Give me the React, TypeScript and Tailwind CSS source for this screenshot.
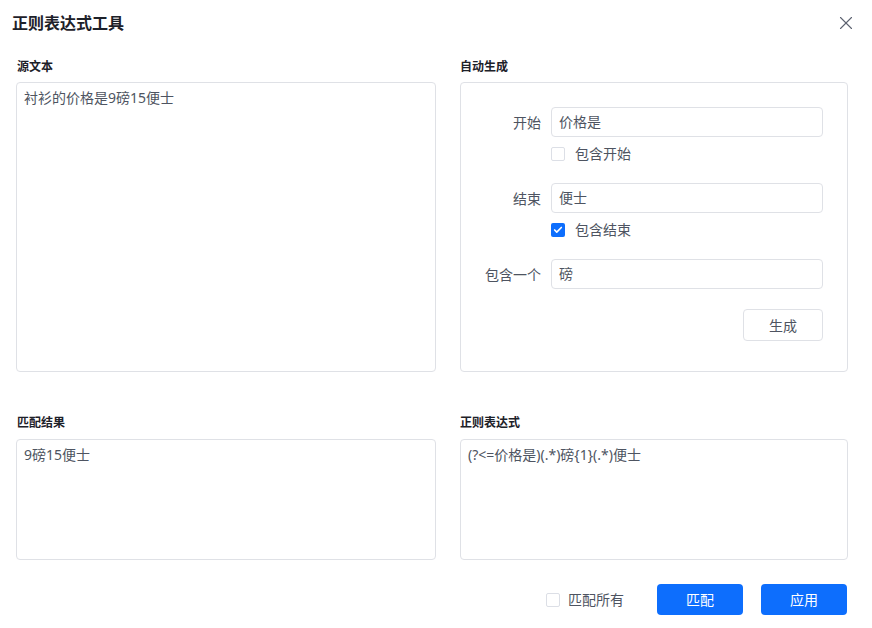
import { X, Check } from "lucide-react";

const font = { fontFamily: '"Noto Sans", "Noto Sans CJK SC", sans-serif' };

function Field({ label, value }: { label: string; value: string }) {
  return (
    <div className="flex items-center">
      <span className="w-[90px] pr-[10px] text-right text-[14px] text-[#4e5461]">{label}</span>
      <div className="h-[30px] flex-1 rounded-[4px] border border-[#dfe1e6] px-[7px] text-[14px] leading-[28px] text-[#4e5461]">
        {value}
      </div>
    </div>
  );
}

function CheckBox({ checked, label }: { checked?: boolean; label: string }) {
  return (
    <div className="flex h-[20px] items-center gap-[10px] text-[14px] leading-[20px] text-[#4e5461]">
      {checked ? (
        <span className="flex h-[14px] w-[14px] items-center justify-center rounded-[2px] bg-[#0d6efd]">
          <Check className="h-[10px] w-[10px] text-white" strokeWidth={4} />
        </span>
      ) : (
        <span className="h-[14px] w-[14px] rounded-[2px] border border-[#dcdfe6] bg-white" />
      )}
      <span>{label}</span>
    </div>
  );
}

export default function App() {
  return (
    <div className="h-[628px] w-[872px] bg-white" style={font}>
      <div className="flex items-center justify-between pl-[12px] pr-[15px] pt-[11px]">
        <h1 className="text-[16px] font-bold leading-[24px] text-[#1d2129]">正则表达式工具</h1>
        <X className="h-[22px] w-[22px] text-[#5c6270]" strokeWidth={1.2} />
      </div>

      <div className="mt-[22px] flex gap-[24px] px-[16px]">
        <div className="w-[420px]">
          <div className="pl-[1px] text-[12px] font-bold leading-[20px] text-[#1d2129]">源文本</div>
          <div className="mt-[5px] h-[290px] rounded-[4px] border border-[#dfe1e6] px-[7px] py-[4px] text-[14px] text-[#4e5461]">
            衬衫的价格是9磅15便士
          </div>
        </div>
        <div className="w-[388px]">
          <div className="text-[12px] font-bold leading-[20px] text-[#1d2129]">自动生成</div>
          <div className="mt-[5px] h-[290px] rounded-[4px] border border-[#dfe1e6] pr-[24px] pt-[24px]">
            <Field label="开始" value="价格是" />
            <div className="ml-[90px] mt-[7px]">
              <CheckBox label="包含开始" />
            </div>
            <div className="mt-[19px]">
              <Field label="结束" value="便士" />
            </div>
            <div className="ml-[90px] mt-[7px]">
              <CheckBox checked label="包含结束" />
            </div>
            <div className="mt-[19px]">
              <Field label="包含一个" value="磅" />
            </div>
            <div className="mt-[20px] flex justify-end">
              <button className="h-[32px] w-[80px] rounded-[4px] border border-[#dfe1e6] bg-white text-[14px] text-[#4e5461]">
                生成
              </button>
            </div>
          </div>
        </div>
      </div>

      <div className="mt-[41px] flex gap-[24px] px-[16px]">
        <div className="w-[420px]">
          <div className="pl-[1px] text-[12px] font-bold leading-[20px] text-[#1d2129]">匹配结果</div>
          <div className="mt-[6px] h-[121px] rounded-[4px] border border-[#dfe1e6] px-[7px] py-[4px] text-[14px] text-[#4e5461]">
            9磅15便士
          </div>
        </div>
        <div className="w-[388px]">
          <div className="text-[12px] font-bold leading-[20px] text-[#1d2129]">正则表达式</div>
          <div className="mt-[6px] h-[121px] rounded-[4px] border border-[#dfe1e6] px-[7px] py-[4px] text-[14px] text-[#4e5461]">
            (?&lt;=价格是)(.*)磅{"{1}"}(.*)便士
          </div>
        </div>
      </div>

      <div className="mt-[24px] flex items-center justify-end pr-[25px]">
        <div className="mr-[33px] flex items-center gap-[8px] text-[14px] text-[#4e5461]">
          <span className="h-[14px] w-[14px] rounded-[2px] border border-[#dcdfe6] bg-white" />
          <span>匹配所有</span>
        </div>
        <button className="h-[31px] w-[86px] rounded-[4px] bg-[#0d6efd] text-[14px] text-white">匹配</button>
        <button className="ml-[18px] h-[31px] w-[86px] rounded-[4px] bg-[#0d6efd] text-[14px] text-white">应用</button>
      </div>
    </div>
  );
}
